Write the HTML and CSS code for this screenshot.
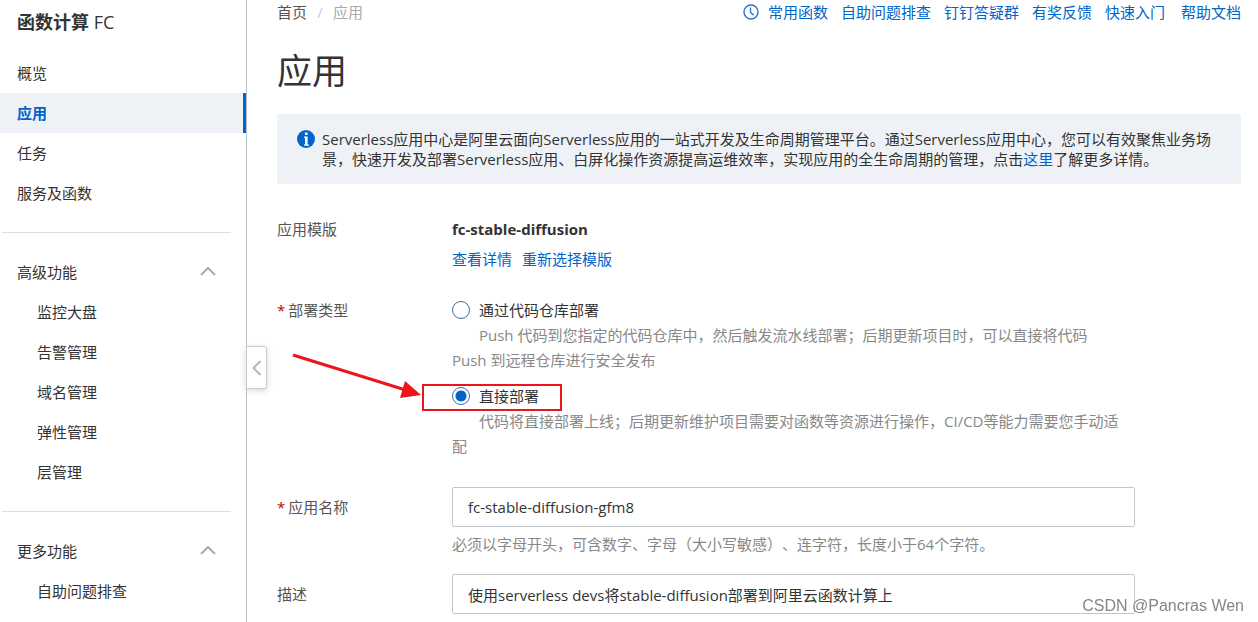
FILE: index.html
```html
<!DOCTYPE html>
<html lang="zh-CN">
<head>
<meta charset="utf-8">
<title>函数计算 FC</title>
<link rel="stylesheet" href="styles.css">
</head>
<body>
<div class="layout">
  <aside class="sidebar">
    <div class="product">函数计算 <span class="product-code">FC</span></div>
    <nav>
      <ul class="menu">
        <li><a class="item" href="#">概览</a></li>
        <li><a class="item active" href="#" aria-current="page">应用</a></li>
        <li><a class="item" href="#">任务</a></li>
        <li><a class="item" href="#">服务及函数</a></li>
      </ul>
      <hr class="divider">
      <button class="item group" type="button" aria-expanded="true">高级功能
        <svg width="16" height="10" viewBox="0 0 16 10" fill="none" stroke="#aaa" stroke-width="2"><path d="M1 8 8 1l7 7"/></svg>
      </button>
      <ul class="menu sub">
        <li><a class="item" href="#">监控大盘</a></li>
        <li><a class="item" href="#">告警管理</a></li>
        <li><a class="item" href="#">域名管理</a></li>
        <li><a class="item" href="#">弹性管理</a></li>
        <li><a class="item" href="#">层管理</a></li>
      </ul>
      <hr class="divider">
      <button class="item group" type="button" aria-expanded="true">更多功能
        <svg width="16" height="10" viewBox="0 0 16 10" fill="none" stroke="#aaa" stroke-width="2"><path d="M1 8 8 1l7 7"/></svg>
      </button>
      <ul class="menu sub">
        <li><a class="item" href="#">自助问题排查</a></li>
      </ul>
    </nav>
    <button class="collapse" type="button" aria-label="收起菜单">
      <svg width="10" height="16" viewBox="0 0 10 16" fill="none" stroke="#b5b5b5" stroke-width="2"><path d="M8.5 1 1.500 8l7 7"/></svg>
    </button>
  </aside>

  <main class="content">
    <header class="topbar">
      <nav class="crumbs"><a href="#">首页</a><span class="slash">/</span><span class="current">应用</span></nav>
      <nav class="links">
        <a class="recent" href="#"><svg width="16" height="16" viewBox="0 0 16 16" fill="none" stroke="#2a74c9" stroke-width="1.4"><circle cx="8" cy="8" r="7"/><path d="M7.500 3.500v5l3.200 2.600"/></svg>常用函数</a>
        <a href="#">自助问题排查</a>
        <a href="#">钉钉答疑群</a>
        <a href="#">有奖反馈</a>
        <a href="#">快速入门</a>
        <a class="docs" href="#">帮助文档</a>
      </nav>
    </header>
    <h1>应用</h1>
    <div class="notice">
      <svg class="notice-icon" width="18" height="18" viewBox="0 0 18 18"><circle cx="9" cy="9" r="9" fill="#0064c8"/><path fill="#fff" d="M8 2.500h2.600v2.500H8zM7 6.500h3.600v8H12v1.200H7v-1.200h1V7.700H7z"/></svg>
      <p>Serverless应用中心是阿里云面向Serverless应用的一站式开发及生命周期管理平台。通过Serverless应用中心，您可以有效聚焦业务场景，快速开发及部署Serverless应用、白屏化操作资源提高运维效率，实现应用的全生命周期的管理，点击<a href="#">这里</a>了解更多详情。</p>
    </div>

    <form class="form">
      <div class="row template-row">
        <span class="label">应用模版</span>
        <div class="field">
          <strong class="template">fc-stable-diffusion</strong>
          <div class="actions"><a href="#">查看详情</a><a href="#">重新选择模版</a></div>
        </div>
      </div>
      <div class="row type-row" role="radiogroup" aria-labelledby="type-label">
        <span class="label" id="type-label"><span class="req">*</span>部署类型</span>
        <div class="field options">
          <div class="option">
            <label class="choice"><input type="radio" name="type">通过代码仓库部署</label>
            <p class="desc">Push 代码到您指定的代码仓库中，然后触发流水线部署；后期更新项目时，可以直接将代码<br>Push 到远程仓库进行安全发布</p>
          </div>
          <div class="option">
            <label class="choice"><input type="radio" name="type" checked>直接部署</label>
            <p class="desc">代码将直接部署上线；后期更新维护项目需要对函数等资源进行操作，CI/CD等能力需要您手动适配</p>
            <span class="mark"></span>
            <svg class="arrow" width="130" height="46" viewBox="0 0 130 46"><path d="M1 2 112 36.500" stroke="#ed151c" stroke-width="3"/><path d="m113 28 16 14-21 3z" fill="#ed151c"/></svg>
          </div>
        </div>
      </div>
      <div class="row name-row">
        <label class="label" for="name"><span class="req">*</span>应用名称</label>
        <div class="field">
          <input class="text" id="name" type="text" value="fc-stable-diffusion-gfm8">
          <p class="help">必须以字母开头，可含数字、字母（大小写敏感）、连字符，长度小于64个字符。</p>
        </div>
      </div>
      <div class="row">
        <label class="label" for="desc">描述</label>
        <div class="field">
          <input class="text" id="desc" type="text" value="使用serverless devs将stable-diffusion部署到阿里云函数计算上">
        </div>
      </div>
    </form>
  </main>
</div>
<div class="watermark">CSDN @Pancras Wen</div>
</body>
</html>
```
FILE: styles.css
```css
* { box-sizing: border-box; }
body {
  margin: 0;
  background: #fff;
  color: #333;
  font: 15px/20px "Open Sans", "Noto Sans CJK SC", sans-serif;
  text-spacing-trim: space-all;
}
a { color: #0064c8; text-decoration: none; }
p, ul { margin: 0; padding: 0; list-style: none; }
button, input { font: inherit; color: inherit; }
svg { flex: none; }

.layout { display: flex; min-height: 100vh; }

.sidebar {
  position: relative;
  flex: 0 0 247px;
  border-right: 1px solid #bcc3ca;
}
.product { padding: 12px 17px 21px; font-size: 18px; font-weight: 700; }
.product-code { font-weight: 400; }
.item {
  display: flex;
  align-items: center;
  width: 100%;
  height: 40px;
  padding: 0 17px;
  color: #333;
}
.active {
  background: #eef2f7;
  border-right: 3px solid #0064c8;
  color: #0064c8;
  font-weight: 700;
}
.sub .item { padding-left: 37px; }
.group {
  justify-content: space-between;
  padding-right: 30px;
  border: 0;
  background: none;
}
.divider {
  height: 1px;
  margin: 19px 15px 19px 2px;
  border: 0;
  background: #dedede;
}
.collapse {
  position: absolute;
  top: 346px;
  left: 100%;
  display: flex;
  align-items: center;
  justify-content: center;
  width: 21px;
  height: 43px;
  padding: 0;
  border: 1px solid #c7cbd1;
  border-radius: 0 2px 2px 0;
  background: #fff;
  box-shadow: 0 2px 6px rgba(0, 0, 0, .15);
}

.content { flex: 1; min-width: 0; padding: 2px 17px 8px 30px; }
.topbar { display: flex; justify-content: space-between; }
.crumbs { display: flex; }
.crumbs a { color: #555; }
.slash { width: 26px; text-align: center; color: #ccc; }
.current { color: #aaa; }
.links { display: flex; gap: 13px; }
.recent { display: flex; align-items: center; gap: 9px; }
.docs { margin-left: 3px; }
h1 { margin: 25px 0 19px; font-size: 35px; line-height: 48px; font-weight: 400; }

.notice {
  display: flex;
  gap: 7px;
  padding: 15px 24px 15px 20px;
  border-radius: 2px;
  background: #eef2f7;
}
.notice-icon { margin-top: 1px; }

.form { margin-top: 30px; padding-right: 106px; }
.row { display: grid; grid-template-columns: 175px minmax(0, 1fr); }
.template-row { margin-bottom: 23px; line-height: 30px; }
.type-row { margin-bottom: 28px; line-height: 26px; }
.name-row { margin-bottom: 13px; }
.label { color: #555; }
.name-row .label, .row:last-child .label { line-height: 40px; }
.req { margin-right: 3px; color: #c80000; }
.template { display: block; }
.actions { display: flex; gap: 10px; }
.options { display: grid; gap: 10px; }
.option { position: relative; }
.choice { display: flex; align-items: center; gap: 9px; }
.choice input {
  appearance: none;
  width: 18px;
  height: 18px;
  margin: 0;
  border: 1px solid #41699b;
  border-radius: 50%;
  background: #fff;
}
.choice input:checked {
  background: radial-gradient(circle, #0064c8 5px, #fff 6px);
}
.desc { padding-right: 8px; line-height: 25px; text-indent: 27px; color: #888; }
.mark {
  position: absolute;
  top: 1px;
  left: -30px;
  width: 140px;
  height: 27px;
  border: 2px solid #ed151c;
}
.arrow { position: absolute; top: -30px; left: -160px; }
.text {
  display: block;
  width: 100%;
  height: 40px;
  padding: 0 15px;
  border: 1px solid #c0c6cc;
  border-radius: 2px;
  background: #fff;
}
.help { line-height: 34px; color: #888; }

.watermark {
  position: fixed;
  right: 14px;
  bottom: 6px;
  color: #858585;
  font: 16px/20px "Liberation Sans", sans-serif;
}
```
